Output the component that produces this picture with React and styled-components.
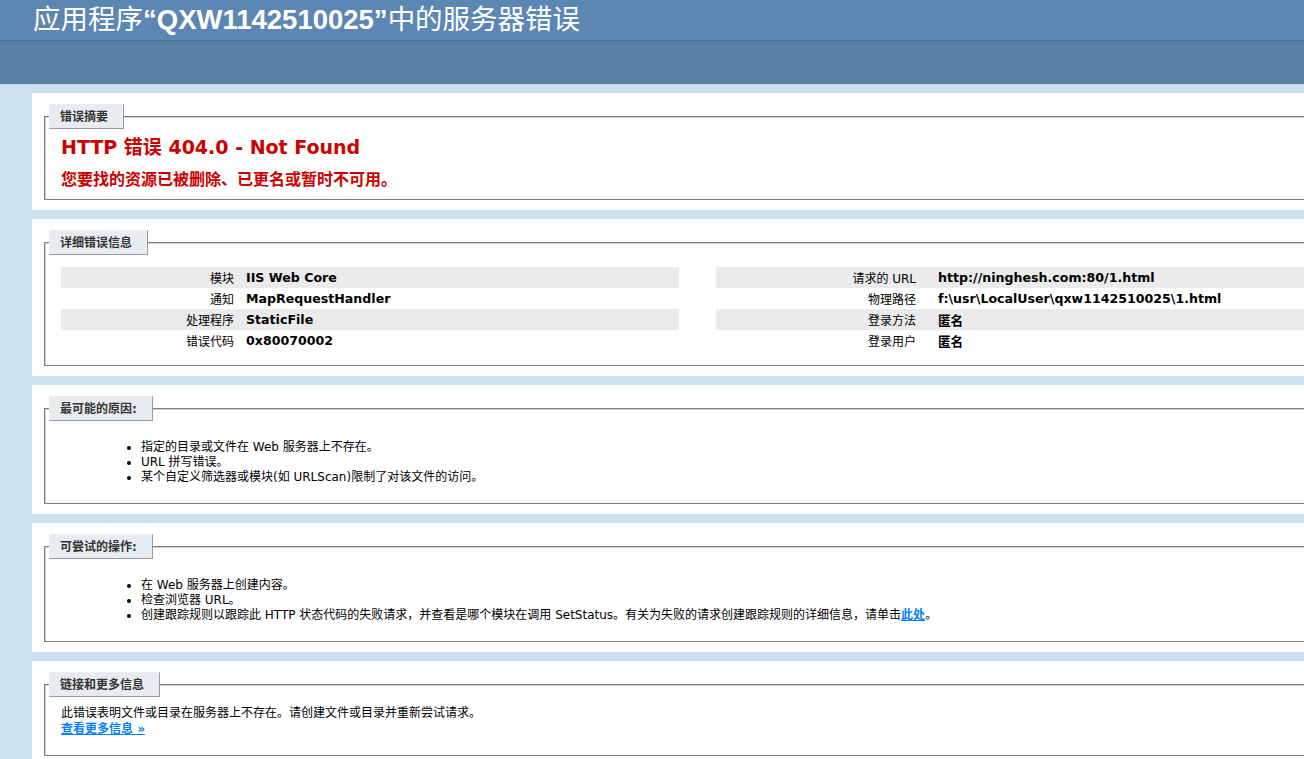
import React from 'react';
import styled, { createGlobalStyle } from 'styled-components';

const Global = createGlobalStyle`
  html, body { margin: 0; padding: 0; overflow: hidden; }
  body {
    background: #CBE1EF;
    font-family: "DejaVu Sans", Verdana, "Noto Sans CJK SC", sans-serif;
    font-size: 12px;
    color: #000;
  }
`;

const Page = styled.div`
  width: 1900px;
  min-height: 759px;
`;

const Header = styled.header`
  height: 40px;
  box-sizing: border-box;
  padding: 0 33px;
  background: #5C87B2;
  display: flex;
  align-items: center;
`;

const Title = styled.h1`
  margin: 0;
  color: #fff;
  font-family: "Liberation Sans", "Noto Sans CJK SC", sans-serif;
  font-size: 27.5px;
  font-weight: 400;
  line-height: 28px;
  white-space: nowrap;
`;

const Strong = styled.span`
  font-weight: 700;
`;

const ServerBar = styled.div`
  height: 43px;
  background: #5A7FA5;
  border-top: 1px solid #4A6C8E;
  border-bottom: 1px solid #C1CFDD;
`;

const Content = styled.main`
  margin-left: 32px;
  display: flex;
  flex-direction: column;
`;

const Card = styled.section`
  width: 1802px;
  margin-top: 8px;
  padding: 11px 10px 10px;
  background: #fff;

  & + & {
    margin-top: 9px;
  }
`;

const Fieldset = styled.div`
  margin: 12px 2px 0;
  padding: 0 16px ${(p) => p.$pb || '10px'};
  border: 1px solid #7d7d7d;
  box-shadow: inset 1px 1px 0 #d4d4d4;
`;

const Legend = styled.div`
  width: fit-content;
  height: 25px;
  box-sizing: border-box;
  margin: -13px 0 6px -12px;
  padding: 2px 15px 0 10px;
  line-height: 21px;
  background: #E7ECF0;
  border-top: 1px solid #EDEDED;
  border-left: 1px solid #EDEDED;
  border-right: 1px solid #9a9a9a;
  border-bottom: 1px solid #9a9a9a;
  color: #333;
  font-weight: 700;
  font-size: 12px;
  white-space: nowrap;
`;

const ErrorTitle = styled.h2`
  margin: 4px 0 0;
  font-size: 19px;
  line-height: 24px;
  color: #CC0000;
  font-weight: 700;
`;

const ErrorSub = styled.h3`
  margin: 11px 0 0;
  font-size: 16px;
  line-height: 20px;
  color: #CC0000;
  font-weight: 700;
`;

const Details = styled.div`
  display: flex;
  margin-top: 12px;
  padding-bottom: 4px;
`;

const DetailCol = styled.div`
  width: ${(p) => p.$w};
  margin-right: ${(p) => p.$mr || '0'};
  flex: none;
`;

const Row = styled.div`
  display: grid;
  grid-template-columns: ${(p) => p.$th} 1fr;
  height: 21px;
  align-items: center;
  background: ${(p) => (p.$alt ? '#ebebeb' : 'transparent')};
  white-space: nowrap;
`;

const Th = styled.div`
  text-align: right;
  padding-right: ${(p) => p.$pad};
  font-weight: 400;
`;

const Td = styled.div`
  font-weight: 700;
  font-size: 12.6px;
`;

const List = styled.ul`
  margin: 19px 0 8px 40px;
  padding-left: 40px;
  line-height: 15px;
`;

const Para = styled.p`
  margin: 8px 0 8px;
  line-height: 16px;
`;

const Link = styled.a`
  color: #007EFF;
  font-weight: 700;
  text-decoration: underline;
`;

const leftRows = [
  ['模块', 'IIS Web Core'],
  ['通知', 'MapRequestHandler'],
  ['处理程序', 'StaticFile'],
  ['错误代码', '0x80070002'],
];

const rightRows = [
  ['请求的 URL', 'http://ninghesh.com:80/1.html'],
  ['物理路径', 'f:\\usr\\LocalUser\\qxw1142510025\\1.html'],
  ['登录方法', '匿名'],
  ['登录用户', '匿名'],
];

function DetailTable({ rows, th, pad }) {
  return rows.map(([k, v], i) => (
    <Row key={k} $alt={i % 2 === 0} $th={th}>
      <Th $pad={pad}>{k}</Th>
      <Td>{v}</Td>
    </Row>
  ));
}

export default function App() {
  return (
    <Page>
      <Global />
      <Header>
        <Title>
          应用程序<Strong>“QXW1142510025”</Strong>中的服务器错误
        </Title>
      </Header>
      <ServerBar />
      <Content>
        <Card>
          <Fieldset $pb="9px">
            <Legend>错误摘要</Legend>
            <ErrorTitle>HTTP 错误 404.0 - Not Found</ErrorTitle>
            <ErrorSub>您要找的资源已被删除、已更名或暂时不可用。</ErrorSub>
          </Fieldset>
        </Card>

        <Card>
          <Fieldset>
            <Legend>详细错误信息</Legend>
            <Details>
              <DetailCol $w="618px" $mr="37px">
                <DetailTable rows={leftRows} th="185px" pad="12px" />
              </DetailCol>
              <DetailCol $w="1111px">
                <DetailTable rows={rightRows} th="222px" pad="22px" />
              </DetailCol>
            </Details>
          </Fieldset>
        </Card>

        <Card>
          <Fieldset>
            <Legend>最可能的原因:</Legend>
            <List>
              <li>指定的目录或文件在 Web 服务器上不存在。</li>
              <li>URL 拼写错误。</li>
              <li>某个自定义筛选器或模块(如 URLScan)限制了对该文件的访问。</li>
            </List>
          </Fieldset>
        </Card>

        <Card>
          <Fieldset>
            <Legend>可尝试的操作:</Legend>
            <List>
              <li>在 Web 服务器上创建内容。</li>
              <li>检查浏览器 URL。</li>
              <li>
                创建跟踪规则以跟踪此 HTTP 状态代码的失败请求，并查看是哪个模块在调用 SetStatus。有关为失败的请求创建跟踪规则的详细信息，请单击
                <Link href="#">此处</Link>。
              </li>
            </List>
          </Fieldset>
        </Card>

        <Card>
          <Fieldset>
            <Legend>链接和更多信息</Legend>
            <Para>
              此错误表明文件或目录在服务器上不存在。请创建文件或目录并重新尝试请求。
              <br />
              <Link href="#">查看更多信息 »</Link>
            </Para>
          </Fieldset>
        </Card>
      </Content>
    </Page>
  );
}
